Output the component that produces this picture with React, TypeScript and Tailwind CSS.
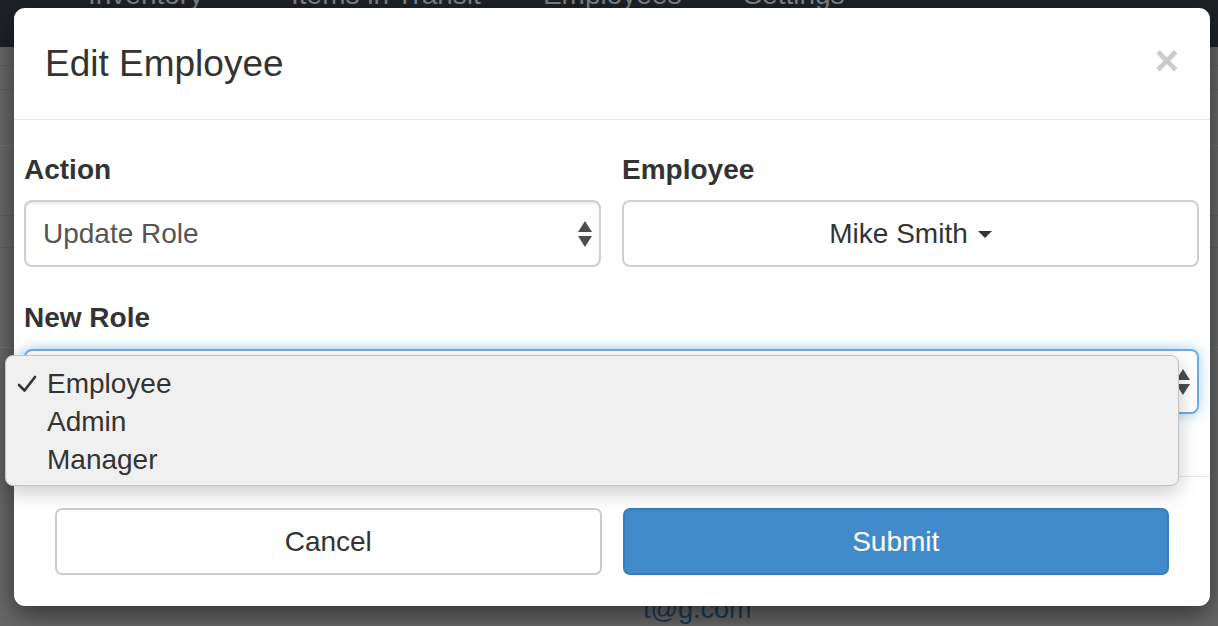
const FONT = { fontFamily: '"Liberation Sans", Arial, sans-serif' };

const navItems = [
   { label: 'Inventory', caret: true },
   { label: 'Items in Transit', caret: false },
   { label: 'Employees', caret: false },
   { label: 'Settings', caret: true },
];

const SelectArrows = ({ className = '' }: { className?: string }) => (
   <svg width='14' height='26' viewBox='0 0 14 26' className={className}>
      <polygon points='0,11 7,0 14,11' fill='#4d4d4d' />
      <polygon points='0,15 14,15 7,26' fill='#4d4d4d' />
   </svg>
);

const Caret = () => (
   <svg width='14' height='8' viewBox='0 0 14 8' className='ml-[10px] mt-[2px]'>
      <polygon points='0,0 14,0 7,7' fill='#333' />
   </svg>
);

const CheckMark = () => (
   <svg width='20' height='18' viewBox='0 0 20 18'>
      <path d='M2 10 L7.5 15.5 L18 2' fill='none' stroke='#333' strokeWidth='2.6' strokeLinecap='round' strokeLinejoin='round' />
   </svg>
);

const roles = ['Employee', 'Admin', 'Manager'];

const App = () => {
   return (
      <div className='relative h-[626px] w-full overflow-hidden bg-[#686868]' style={FONT}>
         {/* page behind the backdrop */}
         <div className='h-[47px] overflow-hidden bg-[#1e2227]'>
            <div className='flex items-center gap-[62px] pl-[88px] mt-[-21px] text-[28px] leading-[32px] text-[#7f8287]'>
               {navItems.map((item) => (
                  <span key={item.label} className='flex items-center whitespace-nowrap'>
                     {item.label}
                     {item.caret && <span className='ml-3 text-[14px]'>▼</span>}
                  </span>
               ))}
            </div>
         </div>
         <div className='h-[19px] border-b border-[#5f5f5f]' />
         <div className='h-[24px] border-b border-[#5f5f5f]' />
         <div className='h-[56px] border-b border-[#707070]' />
         <div className='h-[70px] border-b border-[#5f5f5f]' />
         <div className='h-[32px] border-b border-[#5f5f5f]' />
         <div className='h-[100px] border-b border-[#727272]' />
         <div className='h-[245px]' />
         <div className='pl-[643px] text-[27px] leading-[32px] text-[#1d3a57]'>t@g.com</div>

         {/* modal */}
         <div className='absolute left-[14px] top-[8px] w-[1196px] h-[598px] rounded-[11px] bg-white shadow-[0_9px_27px_rgba(0,0,0,0.5)]'>
            <div className='flex h-[112px] items-center justify-between border-b border-[#e5e5e5] pl-[31px] pr-[31px]'>
               <h4 className='text-[37px] leading-[40px] text-[#333]'>Edit Employee</h4>
               <span className='text-[42px] font-bold leading-none text-[#cccccc] mt-[-6px]'>×</span>
            </div>

            <div className='h-[356px] pt-[34px] pl-[10px] pr-[11px]'>
               <div className='grid grid-cols-2 gap-x-[21px]'>
                  <div>
                     <label className='block h-[32px] text-[28px] font-bold leading-[32px] text-[#333]'>Action</label>
                     <div className='mt-[14px] flex h-[67px] items-center justify-between rounded-[8px] border-2 border-[#cfcfcf] pl-[17px] pr-[7px] shadow-[inset_0_2px_2px_rgba(0,0,0,0.075)]'>
                        <span className='text-[28px] text-[#555]'>Update Role</span>
                        <SelectArrows />
                     </div>
                  </div>
                  <div>
                     <label className='block h-[32px] text-[28px] font-bold leading-[32px] text-[#333]'>Employee</label>
                     <div className='mt-[14px] flex h-[67px] items-center justify-center rounded-[8px] border-2 border-[#cfcfcf]'>
                        <span className='text-[28px] text-[#333]'>Mike Smith</span>
                        <Caret />
                     </div>
                  </div>
               </div>

               <label className='mt-[35px] block h-[32px] text-[28px] font-bold leading-[32px] text-[#333]'>New Role</label>
               <div className='relative mt-[15px]'>
                  <div className='flex h-[65px] items-center justify-end rounded-[8px] border-2 border-[#66afe9] pl-[17px] pr-[7px] shadow-[0_0_14px_rgba(102,175,233,0.6)]'>
                     <SelectArrows />
                  </div>
                  <div className='absolute left-[-19px] top-[6px] h-[131px] w-[1174px] rounded-[8px] border border-[#c4c4c4] bg-[#f0f0f0] pt-[9px] shadow-[0_6px_20px_rgba(0,0,0,0.22)]'>
                     {roles.map((role, i) => (
                        <div key={role} className='flex h-[38px] items-center'>
                           <span className='flex w-[41px] justify-center'>{i === 0 && <CheckMark />}</span>
                           <span className='text-[28px] text-[#333]'>{role}</span>
                        </div>
                     ))}
                  </div>
               </div>
            </div>

            <div className='grid grid-cols-2 gap-x-[21px] border-t border-[#e5e5e5] px-[41px] pt-[31px] pb-[31px]'>
               <button className='h-[67px] rounded-[7px] border-2 border-[#cccccc] bg-white text-[28px] text-[#333]'>Cancel</button>
               <button className='h-[67px] rounded-[7px] border-2 border-[#357ebd] bg-[#428bca] text-[28px] text-white'>Submit</button>
            </div>
         </div>
      </div>
   );
};

export default App;
